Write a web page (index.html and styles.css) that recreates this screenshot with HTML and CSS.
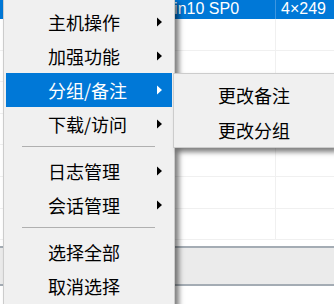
FILE: index.html
```html
<!DOCTYPE html>
<html>
<head>
<meta charset="utf-8">
<link rel="stylesheet" href="styles.css">
</head>
<body>
<div class="table">
  <div class="row selected"><div class="c1">Win10 SP0</div><div class="c2">4×249</div></div>
  <div class="row"><div class="c1"></div><div class="c2"></div></div>
  <div class="row"><div class="c1"></div><div class="c2"></div></div>
  <div class="row"><div class="c1"></div><div class="c2"></div></div>
  <div class="row"><div class="c1"></div><div class="c2"></div></div>
  <div class="row"><div class="c1"></div><div class="c2"></div></div>
  <div class="row"><div class="c1"></div><div class="c2"></div></div>
  <div class="row"><div class="c1"></div><div class="c2"></div></div>
  <div class="gap"></div>
  <div class="band"></div>
  <div class="rest"></div>
</div>

<div class="menu main">
  <div class="item"><span>主机操作</span><svg class="arr" width="6" height="10" viewBox="0 0 6 10"><path d="M0 0.5 L5 5 L0 9.5Z"/></svg></div>
  <div class="item"><span>加强功能</span><svg class="arr" width="6" height="10" viewBox="0 0 6 10"><path d="M0 0.5 L5 5 L0 9.5Z"/></svg></div>
  <div class="item active"><span>分组/备注</span><svg class="arr" width="6" height="10" viewBox="0 0 6 10"><path d="M0 0.5 L5 5 L0 9.5Z"/></svg></div>
  <div class="item"><span>下载/访问</span><svg class="arr" width="6" height="10" viewBox="0 0 6 10"><path d="M0 0.5 L5 5 L0 9.5Z"/></svg></div>
  <div class="sep"></div>
  <div class="item"><span>日志管理</span><svg class="arr" width="6" height="10" viewBox="0 0 6 10"><path d="M0 0.5 L5 5 L0 9.5Z"/></svg></div>
  <div class="item"><span>会话管理</span><svg class="arr" width="6" height="10" viewBox="0 0 6 10"><path d="M0 0.5 L5 5 L0 9.5Z"/></svg></div>
  <div class="sep"></div>
  <div class="item"><span>选择全部</span></div>
  <div class="item"><span>取消选择</span></div>
</div>

<div class="menu sub">
  <div class="item tall"><span>更改备注</span></div>
  <div class="item tall"><span>更改分组</span></div>
</div>
</body>
</html>
```

FILE: styles.css
```css
html, body {
  margin: 0;
  padding: 0;
}
body {
  width: 334px;
  height: 304px;
  overflow: hidden;
  position: relative;
  background: #ffffff;
  font-family: "Noto Sans CJK SC", "Noto Sans", sans-serif;
}

/* background table */
.table {
  display: flex;
  flex-direction: column;
  width: 334px;
}
.row {
  display: flex;
  height: 31.6px;
  box-sizing: border-box;
  border-bottom: 1px solid #f0f0f0;
}
.row.selected {
  height: 19px;
  background: #0078d7;
  color: #ffffff;
  border-bottom: none;
  align-items: flex-start;
  font-family: "Liberation Sans", Arial, sans-serif;
  font-size: 16px;
  line-height: normal;
}
.c1 {
  width: 276px;
  flex: none;
  align-self: stretch;
  border-right: 1px solid #f0f0f0;
  padding-left: 159px;
  box-sizing: border-box;
  white-space: nowrap;
}
.selected .c1 {
  border-right-color: #3d96e0;
}
.c2 {
  flex: 1;
  padding-left: 5px;
  white-space: nowrap;
}
.gap {
  height: 6px;
}
.band {
  height: 36px;
  background: #ebebeb;
  border-top: 2px solid #a4acb4;
  border-bottom: 2px solid #a4acb4;
}
.rest {
  height: 30px;
  background: #ffffff;
}

/* menus */
.menu {
  position: absolute;
  background: #f0f0f0;
  border: 1px solid #cccccc;
  box-sizing: border-box;
  box-shadow: 4px 4px 5px rgba(0, 0, 0, 0.5);
  font-size: 18px;
  color: #000000;
}
.main {
  left: 3px;
  top: -1px;
  width: 172px;
  padding: 5px 1px 10px 1px;
}
.sub {
  left: 173px;
  top: 73px;
  width: 161px;
  border-right: none;
  padding: 3px 0 0 1px;
  height: 75px;
}
.item {
  display: flex;
  align-items: center;
  height: 34px;
  margin: 0 1px 0 1px;
  padding: 0 9px 0 42px;
  box-sizing: border-box;
  line-height: 1;
}
.item.tall {
  height: 35px;
}
.item.active {
  background: #0078d7;
  color: #ffffff;
}
.arr {
  margin-left: auto;
  fill: currentColor;
  display: block;
}
.sep {
  height: 13px;
  box-sizing: border-box;
  padding-top: 5px;
  margin: 0 18px 0 17px;
}
.sep::before {
  content: "";
  display: block;
  height: 1px;
  background: #b0b0b0;
}
```
